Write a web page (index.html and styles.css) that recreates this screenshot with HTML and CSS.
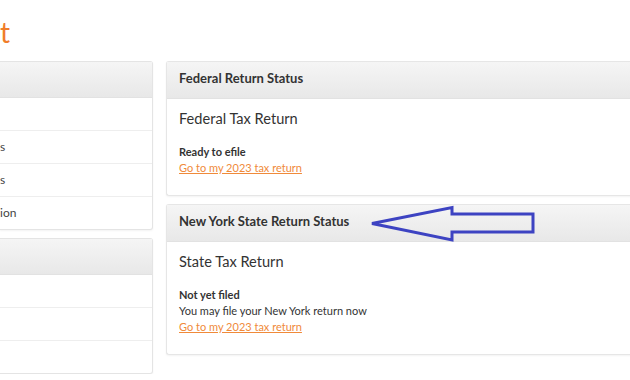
FILE: index.html
```html
<!DOCTYPE html>
<html>
<head>
<meta charset="utf-8">
<link rel="stylesheet" href="styles.css">
</head>
<body>
<div class="page">
  <h1 class="title">t</h1>
  <div class="layout">
    <div class="side">
      <div class="side-panel">
        <div class="side-head"></div>
        <div class="side-row"></div>
        <div class="side-row">s</div>
        <div class="side-row">s</div>
        <div class="side-row">ion</div>
      </div>
      <div class="side-panel">
        <div class="side-head"></div>
        <div class="side-row"></div>
        <div class="side-row"></div>
        <div class="side-row"></div>
      </div>
    </div>
    <div class="main">
      <div class="card">
        <div class="card-head">Federal Return Status</div>
        <div class="card-body">
          <div class="card-title">Federal Tax Return</div>
          <div class="status">
            <div class="status-label">Ready to efile</div>
            <a class="status-link" href="#">Go to my 2023 tax return</a>
          </div>
        </div>
      </div>
      <div class="card">
        <div class="card-head">New York State Return Status</div>
        <div class="card-body">
          <div class="card-title">State Tax Return</div>
          <div class="status">
            <div class="status-label">Not yet filed</div>
            <div class="status-text">You may file your New York return now</div>
            <a class="status-link" href="#">Go to my 2023 tax return</a>
          </div>
        </div>
      </div>
    </div>
  </div>
  <svg class="arrow" width="170" height="40" viewBox="366 204 170 40">
    <path d="M372 223.5 L452 207.5 L452 214 L533 214 L533 232 L452 232 L452 240 Z" fill="none" stroke="#3d43c2" stroke-width="3" stroke-linejoin="miter"/>
  </svg>
</div>
</body>
</html>
```

FILE: styles.css
```css
html, body {
  margin: 0;
  padding: 0;
  background: #ffffff;
  overflow: hidden;
}
body {
  font-family: Lato, "Open Sans", sans-serif;
  color: #333333;
}
.page {
  position: relative;
  width: 720px;
  padding-top: 15px;
}
.title {
  margin: 0 0 12px 0;
  font-size: 28px;
  line-height: 34px;
  font-weight: 400;
  color: #f07d2a;
}
.layout {
  display: grid;
  grid-template-columns: 153px 1fr;
  column-gap: 13px;
  align-items: start;
}
.side {
  display: flex;
  flex-direction: column;
  gap: 8px;
}
.side-panel {
  border: 1px solid #e4e4e4;
  border-left: none;
  border-radius: 0 3px 3px 0;
  box-shadow: 0 1px 2px rgba(0,0,0,0.05);
  background: #fff;
}
.side-head {
  height: 35px;
  background: linear-gradient(#f5f5f5, #e8e8e8);
  border-bottom: 1px solid #e2e2e2;
}
.side-row {
  height: 32px;
  line-height: 32px;
  font-size: 12px;
  color: #444;
  border-bottom: 1px solid #eeeeee;
}
.side-row:last-child {
  border-bottom: none;
}
.main {
  display: flex;
  flex-direction: column;
  gap: 8px;
}
.card {
  border: 1px solid #e6e6e6;
  border-right: none;
  border-radius: 3px 0 0 3px;
  box-shadow: 0 1px 2px rgba(0,0,0,0.05);
  background: #fff;
}
.card-head {
  box-sizing: border-box;
  height: 37px;
  padding: 6px 12px 0;
  line-height: 20px;
  font-size: 13px;
  font-weight: 700;
  color: #333;
  background: linear-gradient(#f5f5f5, #e8e8e8);
  border-bottom: 1px solid #e2e2e2;
}
.card-body {
  padding: 10px 12px 19px;
}
.card-title {
  font-size: 14.6px;
  line-height: 20px;
  color: #333;
}
.status {
  margin-top: 15px;
  font-size: 11px;
  line-height: 16px;
}
.status-label {
  font-weight: 700;
}
.status-text {
  color: #333;
}
.status-link {
  display: block;
  width: max-content;
  color: #f08a3a;
  text-decoration: underline;
}
.arrow {
  position: absolute;
  left: 366px;
  top: 204px;
}
```
